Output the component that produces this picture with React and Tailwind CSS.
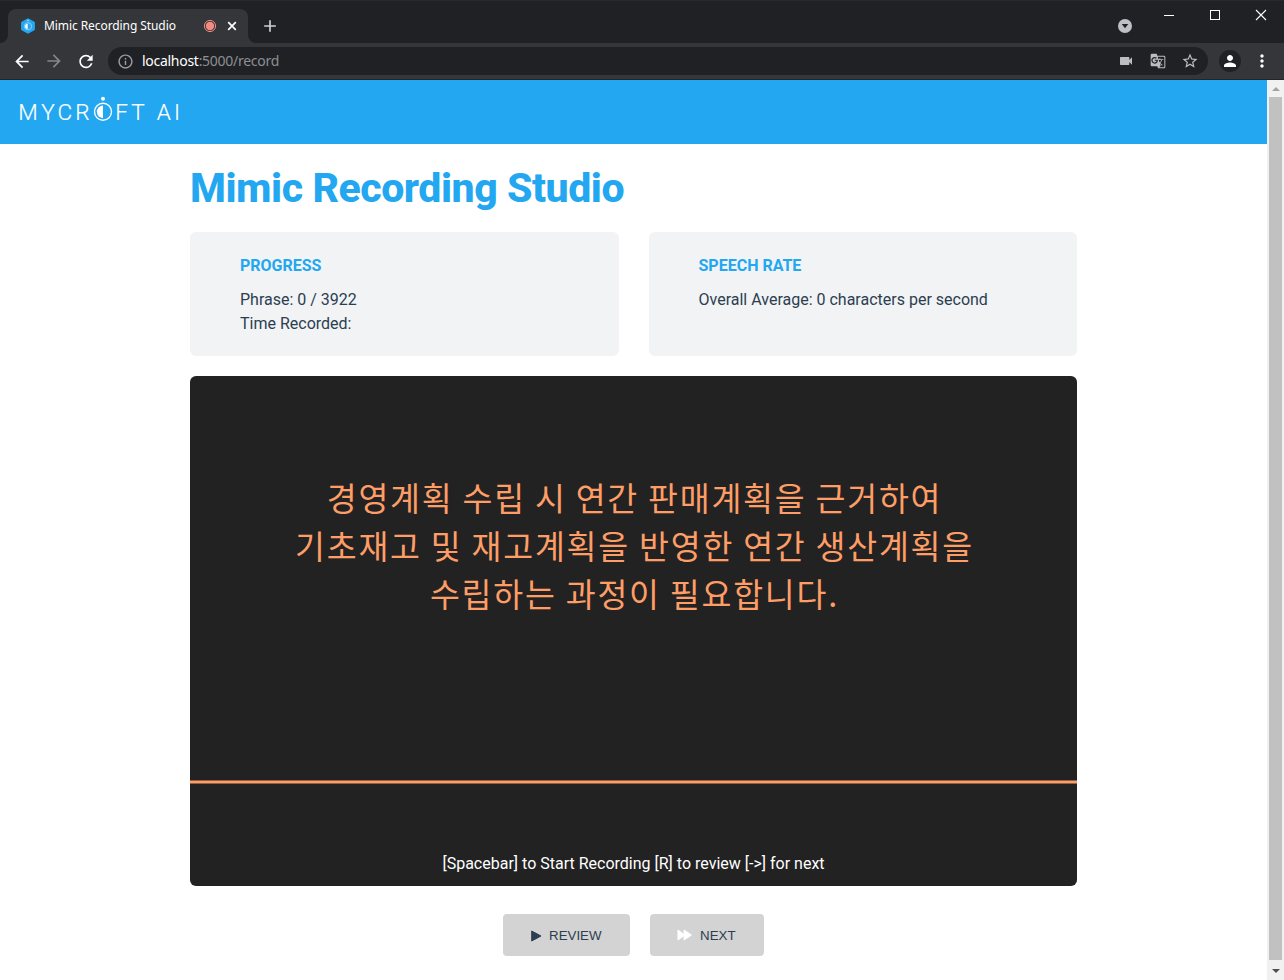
import React from "react";
import {
  MdAdd,
  MdArrowBack,
  MdArrowForward,
  MdGTranslate,
  MdInfoOutline,
  MdMoreVert,
  MdPerson,
  MdRefresh,
  MdStarBorder,
  MdVideocam,
} from "react-icons/md";

function Favicon() {
  return (
    <svg className="h-4 w-4 shrink-0" viewBox="0 0 16 16">
      <path d="M8 0.8 14.4 4.2v7.6L8 15.2 1.6 11.8V4.2z" fill="#22a7f0" stroke="#22a7f0" strokeLinejoin="round" />
      <circle cx="8" cy="8.3" r="3.6" fill="none" stroke="#8fd1f7" strokeWidth="1" />
      <path d="M7.7 5.7a2.6 2.6 0 0 0 0 5.2z" fill="#fff" />
      <circle cx="8" cy="2.6" r="0.8" fill="#b5e1fa" />
    </svg>
  );
}

function TitleBar() {
  return (
    <div className="flex h-[43px] items-end border-t border-[#292929] bg-[#202124]">
      <svg className="h-2 w-2 shrink-0" viewBox="0 0 8 8">
        <path d="M8 0v8H0a8 8 0 0 0 8-8z" fill="#35363a" />
      </svg>
      <div className="flex h-[34px] w-[240px] shrink-0 items-center rounded-t-lg bg-[#35363a] pl-3">
        <Favicon />
        <span className="ml-2 w-[158px] shrink-0 whitespace-nowrap font-['Noto_Sans',sans-serif] text-[12px] tracking-[-0.08px] text-white">
          Mimic Recording Studio
        </span>
        <svg className="h-4 w-4 shrink-0" viewBox="0 0 16 16">
          <circle cx="8" cy="8" r="5.6" fill="none" stroke="#f28b82" strokeWidth="1" />
          <circle cx="8" cy="8" r="4.2" fill="#f28b82" />
        </svg>
        <svg className="ml-[7px] h-[14px] w-[14px] shrink-0" viewBox="0 0 14 14">
          <path d="m3.200 3.200 7.600 7.600M10.800 3.200l-7.600 7.600" stroke="#fff" strokeWidth="1.700" />
        </svg>
      </div>
      <svg className="h-2 w-2 shrink-0" viewBox="0 0 8 8">
        <path d="M0 0v8h8a8 8 0 0 1-8-8z" fill="#35363a" />
      </svg>
      <MdAdd className="mb-[7px] ml-[4px] h-5 w-5 text-[#d0d1d3]" />
      <div className="ml-auto flex h-full">
        <svg className="h-[42px] w-[166px]" viewBox="0 0 166 42">
          <circle cx="7" cy="25" r="7" fill="#bdc1c6" />
          <path d="M3.7 23h6.6L7 27.3z" fill="#202124" />
          <path d="M46 14.5h10" stroke="#fff" />
          <rect x="92.5" y="9.5" width="9" height="9" fill="none" stroke="#fff" />
          <path d="m138 9 10 10M148 9l-10 10" stroke="#fff" strokeWidth="1.1" />
        </svg>
      </div>
    </div>
  );
}

function Toolbar() {
  return (
    <div className="flex h-[37px] items-center border-b border-[#242528] bg-[#35363a] pl-3 pr-3">
      <MdArrowBack className="h-[21px] w-5 text-white" />
      <MdArrowForward className="ml-3 h-5 w-5 text-[#85868a]" />
      <MdRefresh className="ml-3 h-[21px] w-5 text-white" />
      <div className="ml-3 flex h-7 w-[1100px] items-center rounded-full bg-[#202124] pl-[9px] pr-[9px] text-[#bdbdbf]">
        <MdInfoOutline className="h-[17px] w-[17px] text-[#9aa0a6]" />
        <span className="-mt-px ml-2 whitespace-nowrap font-['Noto_Sans',sans-serif] text-[14px] tracking-[-0.28px] text-[#8c8f93]">
          <span className="text-white">localhost</span>:5000/record
        </span>
        <MdVideocam className="ml-auto h-4 w-4" />
        <MdGTranslate className="ml-4 h-4 w-4" />
        <MdStarBorder className="ml-[15px] h-[18px] w-[18px]" />
      </div>
      <div className="ml-[11px] flex h-[22px] w-[22px] items-center justify-center rounded-full bg-[#202124] text-white">
        <MdPerson className="h-[18px] w-[18px]" />
      </div>
      <MdMoreVert className="ml-[11px] h-5 w-5 shrink-0 text-white" />
    </div>
  );
}

function MycroftLogo() {
  return (
    <svg className="h-16 w-[200px]" viewBox="0 0 200 64" fill="#fff">
      <text
        x="18.3 41.2 57.5 75.2 115.2 131.3 156.8 174"
        y="40"
        className="font-[Roboto,sans-serif] text-[22.5px] font-light"
        stroke="#fff"
        strokeWidth="0.2"
      >
        MYCRFTAI
      </text>
      <circle cx="103" cy="31.8" r="8.5" fill="none" stroke="#fff" strokeWidth="1.4" />
      <path d="M103 25.6a6.2 6.2 0 0 0 0 12.4z" />
      <circle cx="103" cy="18.8" r="2" />
    </svg>
  );
}

function StatCard({ title, lines }) {
  return (
    <section className="h-[124px] flex-1 rounded-md bg-[#f1f3f5] px-[50px] pt-[22px]">
      <h2 className="text-base font-bold leading-6 text-[#22a7f0]">{title}</h2>
      <div className="mt-2.5">
        {lines.map((line) => (
          <p key={line} className="leading-6">
            {line}
          </p>
        ))}
      </div>
    </section>
  );
}

function PhrasePanel() {
  return (
    <section className="mt-5 flex h-[510px] flex-col rounded-md bg-[#222] text-center">
      <div className="h-[404px] pl-[2px] pt-[97px] font-['Noto_Sans_CJK_KR',sans-serif] text-[32.5px] font-normal leading-[48px] tracking-[1.78px] text-[#fe9e66]">
        <p>경영계획 수립 시 연간 판매계획을 근거하여</p>
        <p>기초재고 및 재고계획을 반영한 연간 생산계획을</p>
        <p>수립하는 과정이 필요합니다.</p>
      </div>
      <svg className="h-1 w-full" viewBox="0 0 887 4" preserveAspectRatio="none">
        <path d="M0 2h887" stroke="#fe9e66" strokeWidth="3" />
      </svg>
      <p className="mt-[68px] leading-6 text-white">
        [Spacebar] to Start Recording [R] to review [-&gt;] for next
      </p>
    </section>
  );
}

function Controls() {
  return (
    <div className="mt-7 flex justify-center gap-5 font-['Liberation_Sans',sans-serif] text-[13.33px]">
      <button className="flex h-[42px] w-[127px] items-center rounded bg-[#d3d3d3] pl-7 pt-0.5">
        <svg className="h-3 w-[11px]" viewBox="0 0 11 12">
          <path d="M.7 1v10L10 6z" fill="#2c3e50" stroke="#2c3e50" strokeWidth="1" strokeLinejoin="round" />
        </svg>
        <span className="ml-[7px]">REVIEW</span>
      </button>
      <button className="flex h-[42px] w-[114px] items-center rounded bg-[#d3d3d3] pl-[27px] pt-0.5">
        <svg className="h-3 w-4 -translate-y-px" viewBox="0 0 16 12">
          <path d="M1 1v10l6-4.5V11l7.5-5L7 1v4.5z" fill="#fff" stroke="#fff" strokeLinejoin="round" />
        </svg>
        <span className="ml-[7px]">NEXT</span>
      </button>
    </div>
  );
}

function Scrollbar() {
  return (
    <div className="flex w-[17px] flex-col bg-[#f1f1f1]">
      <svg className="h-[17px] w-[17px]" viewBox="0 0 17 17">
        <path d="M5 11h8L9 7z" fill="#a3a3a3" />
      </svg>
      <div className="ml-0.5 h-[863px] w-[13px] bg-[#c1c1c1]" />
      <svg className="h-5 w-[17px]" viewBox="0 0 17 20">
        <path d="M5 9h8l-4 4z" fill="#505050" />
      </svg>
    </div>
  );
}

export default function App() {
  return (
    <div className="flex h-[980px] w-[1284px] flex-col overflow-hidden bg-white">
      <TitleBar />
      <Toolbar />
      <div className="flex h-[900px]">
        <div className="w-[1267px] font-[Roboto,sans-serif] text-base text-[#2c3e50]">
          <header className="h-16 bg-[#22a7f0]">
            <MycroftLogo />
          </header>
          <main className="mx-auto w-[887px]">
            <h1 className="flex h-[88px] items-center whitespace-nowrap pt-0.5 text-[41px] font-extrabold tracking-[-0.44px] text-[#22a7f0]">
              Mimic Recording Studio
            </h1>
            <div className="flex gap-[30px]">
              <StatCard title="PROGRESS" lines={["Phrase: 0 / 3922", "Time Recorded:"]} />
              <StatCard title="SPEECH RATE" lines={["Overall Average: 0 characters per second"]} />
            </div>
            <PhrasePanel />
            <Controls />
          </main>
        </div>
        <Scrollbar />
      </div>
    </div>
  );
}
